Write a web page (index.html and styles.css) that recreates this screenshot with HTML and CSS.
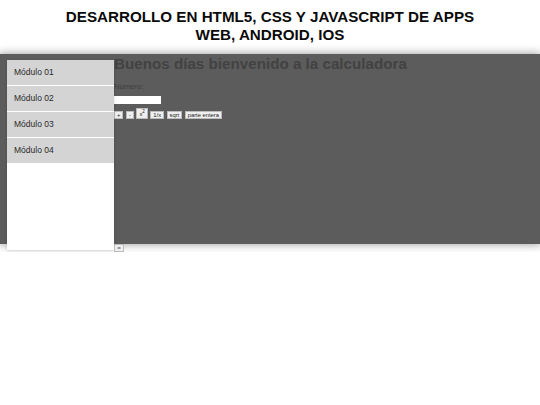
FILE: index.html
```html
<!DOCTYPE html>
<html lang="es">
<head>
<meta charset="utf-8">
<title>Calculadora</title>
<link rel="stylesheet" href="styles.css">
</head>
<body>
<h1 class="title">DESARROLLO EN HTML5, CSS Y JAVASCRIPT DE APPS<br>WEB, ANDROID, IOS</h1>
<div class="panel">
  <nav class="sidebar">
    <div class="item">Módulo 01</div>
    <div class="item">Módulo 02</div>
    <div class="item">Módulo 03</div>
    <div class="item">Módulo 04</div>
  </nav>
  <main class="content">
    <h2 class="greeting">Buenos días bienvenido a la calculadora</h2>
    <label class="label" for="num">Número:</label>
    <input class="field" id="num" type="text">
    <div class="buttons">
      <button class="btn">+</button>
      <button class="btn">-</button>
      <button class="btn btn-tall">x<sup>2</sup></button>
      <button class="btn">1/x</button>
      <button class="btn">sqrt</button>
      <button class="btn">parte entera</button>
    </div>
  </main>
</div>
<div class="footer"><button class="mini">=</button></div>
</body>
</html>
```

FILE: styles.css
```css
html, body {
  margin: 0;
  padding: 0;
  background: #ffffff;
  font-family: "Liberation Sans", Arial, sans-serif;
}
.title {
  margin: 8px 0 0;
  font-size: 15.2px;
  line-height: 18px;
  font-weight: bold;
  text-align: center;
  color: #0a0a0a;
}
.panel {
  margin-top: 10px;
  height: 190px;
  background: #5c5c5c;
  box-shadow: 0 0 8px 1px rgba(0,0,0,0.35);
  display: flex;
  align-items: flex-start;
}
.sidebar {
  margin: 6px 0 0 7px;
  width: 107px;
  height: 190px;
  flex: none;
  background: #ffffff;
  box-shadow: 0 1px 3px rgba(0,0,0,0.15);
  position: relative;
  z-index: 1;
}
.item {
  background: #d4d4d4;
  height: 24.5px;
  margin-bottom: 1.5px;
  padding-left: 7px;
  font-size: 8.5px;
  line-height: 24px;
  color: #2a2a2a;
}
.content {
  display: flex;
  flex-direction: column;
  align-items: flex-start;
}
.greeting {
  margin: 1px 0 0;
  font-size: 15.2px;
  line-height: 18px;
  font-weight: bold;
  color: #424242;
}
.label {
  margin-top: 9px;
  font-size: 7.6px;
  line-height: 9px;
  color: #3c3c3c;
}
.field {
  margin-top: 5px;
  width: 47px;
  height: 8px;
  box-sizing: border-box;
  border: none;
  padding: 0;
  background: #fff;
}
.buttons {
  margin-top: 4px;
  display: flex;
  align-items: flex-end;
  gap: 2.5px;
}
.btn {
  font-family: "Liberation Sans", Arial, sans-serif;
  font-size: 5.8px;
  line-height: 6px;
  height: 8px;
  padding: 0 2px;
  min-width: 8px;
  border: 1px solid #bbb;
  background: #efefef;
  color: #222;
  border-radius: 0;
}
.btn-tall {
  height: 11px;
}
.btn sup {
  font-size: 4.5px;
  line-height: 0;
}
.footer {
  padding-left: 114px;
}
.mini {
  display: block;
  width: 10px;
  height: 8px;
  padding: 0;
  border: 1px solid #bbb;
  background: #eee;
  font-size: 6px;
  line-height: 5px;
  font-weight: bold;
  color: #555;
  position: relative;
  z-index: 2;
}
```
